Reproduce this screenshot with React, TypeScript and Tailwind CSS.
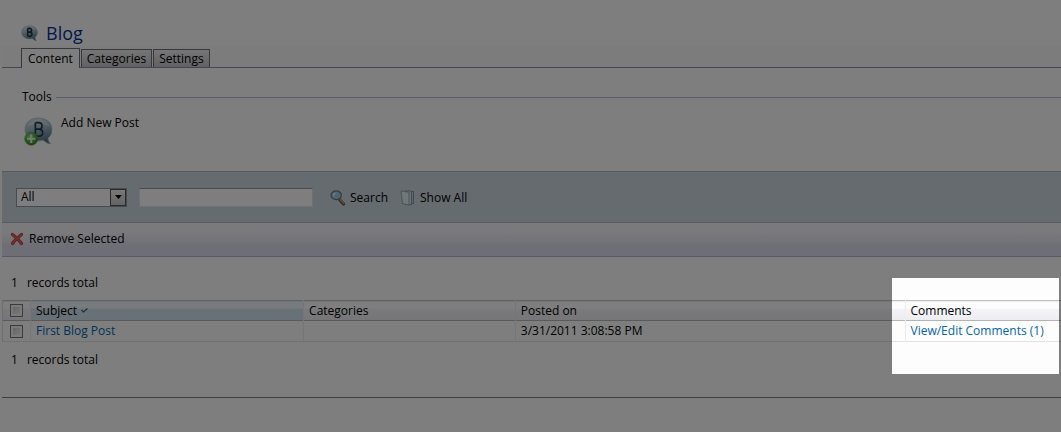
import { useState } from "react";
import type { ReactNode } from "react";

function BlogIcon({ size, withPlus = false }: { size: number; withPlus?: boolean }) {
  return (
    <svg width={size} height={size} viewBox="0 0 28 28" aria-hidden="true" className="shrink-0">
      <defs>
        <linearGradient id="bubble" x1="0" y1="0" x2="0.3" y2="1">
          <stop offset="0" stopColor="#dce8ee" />
          <stop offset="0.5" stopColor="#a3bac8" />
          <stop offset="1" stopColor="#55788c" />
        </linearGradient>
        <radialGradient id="plus" cx="0.4" cy="0.35" r="0.7">
          <stop offset="0" stopColor="#8bdb6e" />
          <stop offset="1" stopColor="#23831b" />
        </radialGradient>
      </defs>
      <path
        d="M14 1C6.500 1 1 5.500 1 12S6.500 23 14 23c1.700 0 3.300-.2 4.700-.7 1.500 2 4 3.400 7 3.700-1.800-1.600-2.500-3.600-2.500-5.700 2.400-1.900 3.800-4.600 3.800-8.300C27 5.500 21.500 1 14 1z"
        fill="url(#bubble)"
        stroke="#9db3c0"
        strokeWidth="0.6"
      />
      <path d="M4 9c2-5 7-6.500 11-6.500S23 5 24.500 9c-6-3-14-3-20.500 0z" fill="#f0f6f8" opacity="0.4" />
      <path
        d="M11 5.500v13M11 5.500h3c4.600 0 4.600 6.200 0 6.200H11M14 11.700c5.400 0 5.400 6.800 0 6.800H11"
        fill="none"
        stroke="#20384a"
        strokeWidth={withPlus ? 1.6 : 2.6}
      />
      {withPlus && (
        <>
          <circle cx="7" cy="21" r="6.300" fill="url(#plus)" stroke="#4e9f3c" strokeWidth="0.6" />
          <path d="M7 17v8M3 21h8" stroke="#e6f7e0" strokeWidth="2" />
        </>
      )}
    </svg>
  );
}

function SearchIcon() {
  return (
    <svg width="16" height="16" viewBox="0 0 16 16" aria-hidden="true">
      <path d="M9.500 9.500l4 4.500" stroke="#66543c" strokeWidth="3.200" strokeLinecap="round" />
      <path d="M10 9.500l3.800 4.200" stroke="#c0a67c" strokeWidth="1.200" strokeLinecap="round" />
      <ellipse cx="6.200" cy="5.300" rx="5.200" ry="4.400" fill="#a2c6dc" stroke="#607889" strokeWidth="1.200" />
      <path d="M2.500 5c.6-2 2.500-2.600 4.500-2.200C5.500 3.500 4.500 5 4 7z" fill="#e2eff6" />
    </svg>
  );
}

function PagesIcon() {
  return (
    <svg width="16" height="16" viewBox="0 0 16 16" aria-hidden="true">
      <path d="M8 1.500h5.500v12H8z" fill="#c2d3db" stroke="#6f8590" strokeWidth="0.8" />
      <path d="M5 1h6.500v13.500H5z" fill="#dce8ed" stroke="#6f8590" strokeWidth="0.8" />
      <path d="M1 1l8 1.200v13L2.500 13.500z" fill="#e3eef2" stroke="#8199a3" strokeWidth="0.8" />
    </svg>
  );
}

function RemoveIcon() {
  return (
    <svg width="14" height="14" viewBox="0 0 14 14" aria-hidden="true">
      <path d="M2.500 2.500C6 5 9 8 11.500 11.500M11.500 2.500C8 5 5 8 2.500 11.500" stroke="#a92f2c" strokeWidth="3.200" strokeLinecap="round" />
      <path d="M2.500 2.500C6 5 9 8 11.500 11.500M11.500 2.500C8 5 5 8 2.500 11.500" stroke="#dc5f59" strokeWidth="2.200" strokeLinecap="round" />
    </svg>
  );
}

function Tab({ label, active, onSelect }: { label: string; active: boolean; onSelect: () => void }) {
  return (
    <button
      type="button"
      role="tab"
      aria-selected={active}
      onClick={onSelect}
      className={
        active
          ? "-mb-px h-5 border border-b-0 border-[#707078] bg-[#fdfdfd] px-1.5"
          : "h-[18px] border border-b-0 border-[#707078] bg-linear-to-b from-[#ececec] to-[#c4c4c8] px-[5px] leading-[18px]"
      }
    >
      {label}
    </button>
  );
}

function Tick({ label }: { label: string }) {
  return (
    <input
      type="checkbox"
      aria-label={label}
      className="mx-auto block size-[13px] appearance-none border border-[#777] bg-linear-to-br from-[#c4c4c8] to-[#fafafa] shadow-[inset_0_0_0_2px_#f4f4f4] checked:bg-[#4b83b3]"
    />
  );
}

function Total() {
  return (
    <p className="flex gap-[9px] pl-[9px] leading-4">
      <span>1</span>
      <span>records total</span>
    </p>
  );
}

function HeadCell({ children, sorted = false }: { children: ReactNode; sorted?: boolean }) {
  return (
    <th
      scope="col"
      className={
        sorted
          ? "border-l border-[#ececec] bg-linear-to-b from-[#eef7fc] from-35% to-[#cfe2ed] to-40% px-[5px] text-left font-normal"
          : "border-l border-[#ececec] px-[5px] text-left font-normal"
      }
    >
      {children}
    </th>
  );
}

export default function App() {
  const [tab, setTab] = useState("Content");

  return (
    <div className="relative min-h-screen overflow-hidden bg-[#fdfdfd] pl-0.5 font-['Open_Sans','Noto_Sans',sans-serif] text-[12px] leading-4 text-black">
      <header className="flex items-center gap-2 pt-5 pl-[19px]">
        <BlogIcon size={17} />
        <h1 className="text-[18px] leading-[26px] text-[#003399]">Blog</h1>
      </header>

      <div role="tablist" className="flex items-end gap-px border-b border-[#8c8cae] bg-[#f9f9f9] pt-0.5 pl-[19px]">
        {["Content", "Categories", "Settings"].map((name) => (
          <Tab key={name} label={name} active={tab === name} onSelect={() => setTab(name)} />
        ))}
      </div>

      <section className="pt-[21px] pl-5">
        <div className="flex items-center gap-1">
          <h2>Tools</h2>
          <span className="h-px flex-1 bg-[#b9b9d8]" />
        </div>
        <button type="button" className="mt-2.5 flex items-start gap-2 pl-0.5">
          <span className="pt-0.5">
            <BlogIcon size={29} withPlus />
          </span>
          <span>Add New Post</span>
        </button>
      </section>

      <form
        onSubmit={(event) => event.preventDefault()}
        className="mt-[25px] flex h-[52px] items-center border-y border-[#a9b6c4] bg-[#cad6dc] pl-3.5"
      >
        <div className="relative w-[111px]">
          <select aria-label="Search in" className="block h-[19px] w-full appearance-none border border-[#8a969f] bg-[#fdfdfd] pl-1 leading-4">
            <option>All</option>
          </select>
          <span className="pointer-events-none absolute inset-y-px right-px flex w-4 items-center justify-center border border-[#555] bg-linear-to-b from-[#f2f2f2] to-[#c8c8c8]">
            <svg width="7" height="4" viewBox="0 0 7 4" aria-hidden="true">
              <path d="M0 0h7L3.500 4z" fill="#000" />
            </svg>
          </span>
        </div>
        <input
          type="text"
          aria-label="Search text"
          className="ml-3 h-[19px] w-[174px] border border-[#dde3e6] border-t-[#8d989f] bg-[#fdfdfd] px-1"
        />
        <button type="submit" className="ml-[17px] flex items-center gap-1 pt-0.5">
          <SearchIcon />
          Search
        </button>
        <button type="button" className="ml-3 flex items-center gap-1 pt-0.5">
          <PagesIcon />
          Show All
        </button>
      </form>

      <div className="flex h-[34px] items-center border-b border-[#b4b4cc] bg-linear-to-b from-[#f4f4f8] from-30% to-[#dcdcec] to-70% pb-0.5 pl-2">
        <button type="button" className="flex items-center gap-[5px]">
          <RemoveIcon />
          Remove Selected
        </button>
      </div>

      <div className="pt-[18px]">
        <Total />
      </div>

      <div className="relative mt-[9px]">
        <table className="w-full table-fixed border-collapse">
          <colgroup>
            <col className="w-[28px]" />
            <col className="w-[25.800%]" />
            <col className="w-[20%]" />
            <col />
            <col className="w-[156px]" />
          </colgroup>
          <thead>
            <tr className="h-5 border-y border-t-[#c0c0c0] border-b-[#b4b4b4] bg-linear-to-b from-[#fcfcfd] from-35% via-[#f4f4f8] via-40% to-[#ededf1]">
              <th scope="col" className="border-l border-[#dcdcdc]">
                <Tick label="Select all" />
              </th>
              <HeadCell sorted>
                <span className="flex items-center gap-1">
                  Subject
                  <svg width="7" height="5" viewBox="0 0 7 5" aria-hidden="true">
                    <path d="M.5 2l2 2L6.500.5" fill="none" stroke="#3f6170" strokeWidth="1.200" />
                  </svg>
                </span>
              </HeadCell>
              <HeadCell>Categories</HeadCell>
              <HeadCell>Posted on</HeadCell>
              <HeadCell>Comments</HeadCell>
            </tr>
          </thead>
          <tbody>
            <tr className="h-[21px] border-b border-[#e2e2e2]">
              <td className="border-l border-[#dcdcdc]">
                <Tick label="Select First Blog Post" />
              </td>
              <td className="border-l border-[#ececec] px-[5px]">
                <a href="#post" className="text-[#0066b3]">First Blog Post</a>
              </td>
              <td className="border-l border-[#ececec]" />
              <td className="border-l border-[#ececec] px-[5px]">3/31/2011 3:08:58 PM</td>
              <td className="border-l border-[#ececec] px-[5px]">
                <a href="#comments" className="whitespace-nowrap text-[#0066b3]">View/Edit Comments (1)</a>
              </td>
            </tr>
          </tbody>
        </table>
        <div className="pointer-events-none absolute -top-[22px] right-0.5 h-24 w-[167px] shadow-[0_0_0_4000px_rgba(0,0,0,0.5)]" />
      </div>

      <div className="border-b border-[#7a7a98] pt-2.5 pb-[29px]">
        <Total />
      </div>
    </div>
  );
}
